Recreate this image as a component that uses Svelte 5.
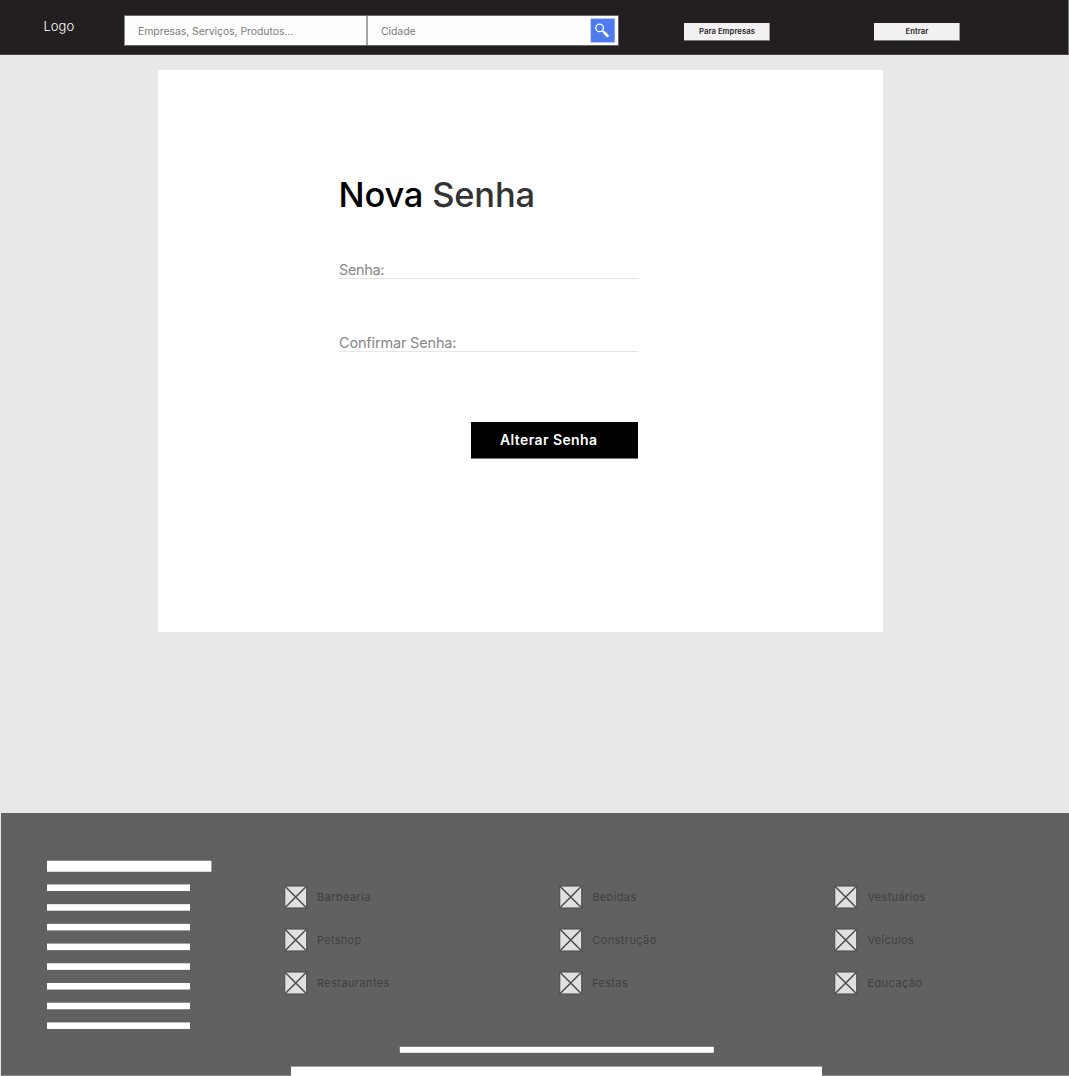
<script>
  const listBars = Array.from({ length: 8 }, (_, i) => 23.7 + i * 19.71);
  const columns = [
    ['Barbearia', 'Petshop', 'Restaurantes'],
    ['Bebidas', 'Construção', 'Festas'],
    ['Vestuários', 'Veiculos', 'Educação']
  ];
  // tracking per label, in pixels
  const spacing = {
    Barbearia: 0.4, Petshop: 0.28, Restaurantes: 0.4,
    Bebidas: 0.38, 'Construção': 0.42, Festas: 0.28,
    'Vestuários': 0.34, Veiculos: 0.33, 'Educação': 0.45
  };
</script>

<div class="page">
  <header>
    <span class="logo">Logo</span>
    <form class="search">
      <span class="field what">Empresas, Serviços, Produtos...</span>
      <span class="field city">Cidade</span>
      <button class="go" type="button" aria-label="Buscar">
        <svg width="26" height="26" viewBox="0 0 26 26">
          <rect x="0.7" y="0.6" width="24" height="23.8" fill="#4f7bee" />
          <circle cx="9.6" cy="9.9" r="3.8" fill="none" stroke="#fff" stroke-width="1.3" />
          <path d="M12.3 12.6 L14.3 14.5" stroke="#fff" stroke-width="1.3" />
          <path d="M14.4 14.7 L17.4 17.8" stroke="#fff" stroke-width="2.7" stroke-linecap="round" />
        </svg>
      </button>
    </form>
    <button class="nav first" type="button">Para Empresas</button>
    <button class="nav" type="button">Entrar</button>
  </header>

  <main>
    <h1>Nova <span>Senha</span></h1>
    <div class="input senha">Senha:</div>
    <div class="input confirm">Confirmar Senha:</div>
    <button class="submit" type="button">Alterar Senha</button>
  </main>

  <footer>
    <div class="top">
      <svg class="bars" width="165" height="170" viewBox="0 0 165 170" fill="#fff">
        <rect x="0" y="0.75" width="164.4" height="11" />
        {#each listBars as y}
          <rect x="0" y={y + 0.75} width="143" height="6.55" />
        {/each}
      </svg>
      {#each columns as names}
        <ul>
          {#each names as name}
            <li>
              <svg width="24" height="24" viewBox="0 0 24 24">
                <rect x="0.5" y="0.8" width="22.4" height="22.4" fill="#e0e0e0" stroke="#55565a" stroke-width="1.6" />
                <path d="M1.2 1.5 L22.2 22.5 M22.2 1.5 L1.2 22.5" stroke="#4b4b4d" stroke-width="1.5" />
              </svg>
              <span style:letter-spacing="{spacing[name]}px">{name}</span>
            </li>
          {/each}
        </ul>
      {/each}
    </div>
    <svg class="bottom" width="532" height="30" viewBox="0 0 532 30" fill="#fff">
      <rect x="108.8" y="0.8" width="314" height="6" />
      <rect x="0" y="20.6" width="531" height="10" />
    </svg>
  </footer>
</div>

<style>
  :global(body) { background: #e8e8e8; }
  .page {
    width: 1069px;
    height: 1076px;
    display: flex;
    flex-direction: column;
    overflow: hidden;
    font-family: Inter, "Liberation Sans", sans-serif;
  }
  button { border: 0; padding: 0; font-family: inherit; border-radius: 0; }
  header {
    box-sizing: border-box;
    height: 55px;
    flex: none;
    display: flex;
    align-items: flex-start;
    background: #231f20;
    border-bottom: 1px solid #464445;
    border-right: 1px solid #777;
  }
  .logo {
    width: 80.5px;
    padding-left: 43.5px;
    padding-top: 17px;
    line-height: 19px;
    font-size: 13px;
    font-weight: 300;
    color: #fff;
  }
  .search {
    box-sizing: border-box;
    width: 495px;
    height: 31px;
    margin-top: 15px;
    display: flex;
    background: #fdfdfd;
    border: 1px solid #666;
    border-left-color: #888;
  }
  .field {
    box-sizing: border-box;
    padding-left: 13px;
    padding-top: 1px;
    line-height: 29px;
    font-size: 10.5px;
    letter-spacing: -0.08px;
    color: #7d7d82;
    white-space: nowrap;
  }
  .what { width: 243px; border-right: 2px solid #a5a5a5; }
  .city { width: 222px; letter-spacing: -0.1px; }
  .go { width: 26px; height: 26px; margin: 2px 0 0; background: none; }
  .go svg { display: block; }
  .nav {
    box-sizing: border-box;
    width: 86px;
    height: 18px;
    margin-top: 23px;
    background: #f3f0f1;
    border-bottom: 1px solid #777;
    border-right: 1px solid #999;
    font-size: 7.7px;
    line-height: 16px;
    padding-left: 1px;
    font-weight: 600;
    color: #231f20;
    letter-spacing: 0.04px;
  }
  .first { margin-left: 65px; margin-right: 104px; }
  main {
    box-sizing: border-box;
    width: 725px;
    height: 562px;
    flex: none;
    margin: 15px 0 0 158px;
    padding: 101px 245px 0 181px;
    background: #fff;
    display: flex;
    flex-direction: column;
  }
  h1 {
    margin: 0;
    height: 48px;
    line-height: 48px;
    font-size: 34.5px;
    font-weight: 500;
    letter-spacing: -0.2px;
    text-indent: -0.5px;
    color: #000;
    white-space: nowrap;
  }
  h1 span { color: #333; }
  .input {
    box-sizing: border-box;
    height: 20px;
    line-height: 22px;
    font-size: 14.5px;
    font-weight: 400;
    letter-spacing: -0.17px;
    color: #888;
    border-bottom: 1px solid #e6e6e6;
  }
  .senha { margin-top: 40px; letter-spacing: -0.35px; }
  .confirm { margin-top: 53px; }
  .submit {
    box-sizing: border-box;
    align-self: flex-end;
    width: 167px;
    height: 37px;
    margin-top: 70px;
    padding: 0 11.5px 1px 0;
    background: #000;
    border-bottom: 1px solid #777;
    color: #fff;
    font-size: 14px;
    font-weight: 600;
    letter-spacing: 0.4px;
  }
  footer {
    box-sizing: border-box;
    height: 263px;
    margin-top: 181px;
    margin-left: 1px;
    background: #616161;
    border-bottom: 1px solid #888;
    display: flex;
    flex-direction: column;
  }
  .top { display: flex; height: 186px; flex: none; padding-top: 47px; padding-left: 46px; }
  .bars { flex: none; margin-right: 72px; }
  ul {
    width: 275.2px;
    margin: 0;
    padding: 25px 0 0;
    list-style: none;
    flex: none;
    display: flex;
    flex-direction: column;
    gap: 19px;
  }
  li { display: flex; align-items: center; gap: 9px; height: 24px; font-size: 11px; color: #3f3f41; }
  .bottom { margin-left: 290px; flex: none; }
</style>
